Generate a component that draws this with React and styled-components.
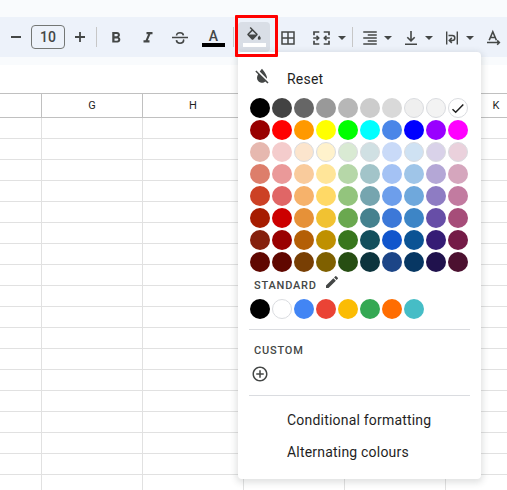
// Packages
import React from "react"
import styled, { createGlobalStyle } from "styled-components"
import {
    MdFormatBold,
    MdFormatItalic,
    MdBorderAll,
    MdFormatAlignRight,
    MdFormatColorReset,
    MdEdit,
    MdAddCircleOutline,
} from "react-icons/md"

// Data
const palette = [
    "#000000 #434343 #666666 #999999 #b7b7b7 #cccccc #d9d9d9 #efefef #f3f3f3 #ffffff",
    "#980000 #ff0000 #ff9900 #ffff00 #00ff00 #00ffff #4a86e8 #0000ff #9900ff #ff00ff",
    "#e6b8af #f4cccc #fce5cd #fff2cc #d9ead3 #d0e0e3 #c9daf8 #cfe2f3 #d9d2e9 #ead1dc",
    "#dd7e6b #ea9999 #f9cb9c #ffe599 #b6d7a8 #a2c4c9 #a4c2f4 #9fc5e8 #b4a7d6 #d5a6bd",
    "#cc4125 #e06666 #f6b26b #ffd966 #93c47d #76a5af #6d9eeb #6fa8dc #8e7cc3 #c27ba0",
    "#a61c00 #cc0000 #e69138 #f1c232 #6aa84f #45818e #3c78d8 #3d85c6 #674ea7 #a64d79",
    "#85200c #990000 #b45f06 #bf9000 #38761d #134f5c #1155cc #0b5394 #351c75 #741b47",
    "#600700 #600700 #783f04 #7f6000 #274e13 #0c343d #1c4587 #073763 #20124d #4c1130",
].flatMap(row => row.split(" "))

const standard =
    "#000000 #ffffff #4285f4 #ea4335 #fbbc04 #34a853 #ff6d01 #46bdc6".split(" ")

const outlined =
    "#efefef #f3f3f3 #ffffff #fce5cd #fff2cc #d9ead3 #d0e0e3 #cfe2f3 #d9d2e9 #ead1dc".split(
        " "
    )

const columns = ["", "G", "H", "I", "J", "K"]
const rows = Array.from({ length: 18 }, (_, i) => i + 1)

// Styles
const GlobalStyle = createGlobalStyle`
    * {
        box-sizing: border-box;
    }

    body {
        margin: 0;
        overflow: hidden;
        background: #ffffff;
        font-family: Roboto, "Liberation Sans", sans-serif;
    }
`

const Page = styled.div`
    position: relative;
    width: 507px;
    height: 490px;
    overflow: hidden;
`

const Header = styled.header`
    height: 65px;
    padding: 17px 0 8px;
    background: #f9fbfd;
`

const Toolbar = styled.div`
    display: flex;
    align-items: center;
    height: 40px;
    padding: 2px 0 0 6px;
    background: #edf2fa;
    color: #444746;

    & > * {
        flex-shrink: 0;
    }
`

const Tool = styled.span`
    display: flex;
    margin-left: ${({ $gap }) => $gap || 0}px;

    svg {
        display: block;
    }
`

const FontSize = styled.span`
    display: flex;
    align-items: center;
    justify-content: center;
    width: 34px;
    height: 24px;
    margin: -2px 0 0 5px;
    border: 1px solid #747775;
    border-radius: 4px;
    font-size: 14px;
    font-weight: 500;
`

const Separator = styled.span`
    width: 1px;
    height: 20px;
    margin: -2px 0 0 ${({ $gap }) => $gap}px;
    background: #c7c7c7;
`

const ColorTool = styled.span`
    display: flex;
    flex-direction: column;
    align-items: center;
    justify-content: space-between;
    width: ${({ $active }) => ($active ? 32 : 23)}px;
    height: ${({ $active }) => ($active ? 30 : 20)}px;
    margin: ${({ $active }) => ($active ? "-2px 0 0 4px" : "-2px 0 0 12px")};
    padding: ${({ $active }) => ($active ? "5px 0" : "0")};
    border-radius: 4px;
    background: ${({ $active }) => ($active ? "#d9dee6" : "none")};
    font-size: 14px;
    font-weight: 500;
    line-height: 18px;
`

const ColorBar = styled.span`
    flex-shrink: 0;
    width: 23px;
    height: 4px;
    margin-top: -2px;
    background: ${({ $color }) => $color};
`

const Formula = styled.div`
    height: 28px;
`

const Row = styled.div`
    display: flex;
    height: ${({ $head }) => ($head ? 25 : 21)}px;
    border-top: ${({ $head }) => ($head ? "1px solid #c0c0c0" : "none")};
    border-bottom: 1px solid ${({ $head }) => ($head ? "#c0c0c0" : "#e1e1e1")};
`

const Cell = styled.div`
    display: flex;
    flex-shrink: 0;
    align-items: center;
    justify-content: center;
    width: 101px;
    border-right: 1px solid ${({ $head }) => ($head ? "#c0c0c0" : "#e1e1e1")};
    color: #1f1f1f;
    font-size: 11px;

    &:first-child {
        width: 42px;
    }
`

const Menu = styled.div`
    position: absolute;
    top: 52px;
    left: 238px;
    width: 243px;
    height: 427px;
    padding: 11px 11px 0;
    border-radius: 4px;
    background: #ffffff;
    box-shadow: 0 2px 6px 2px rgba(60, 64, 67, 0.15);
    color: #444746;
`

const MenuItem = styled.div`
    display: flex;
    align-items: center;
    height: 32px;
    padding-left: ${({ $icon }) => ($icon ? 3 : 38)}px;
    gap: 15px;
    color: #1f1f1f;
    font-size: 14px;
    letter-spacing: 0.2px;

    svg {
        margin-top: -6px;
        color: #444746;
    }
`

const MenuGroup = styled.div`
    padding-top: 8px;
`

const Swatches = styled.div`
    display: grid;
    grid-template-columns: repeat(10, 20px);
    gap: 2px;
    padding: 3px 0 0 1px;
`

const Swatch = styled.span`
    display: flex;
    align-items: center;
    justify-content: center;
    height: 20px;
    border: ${({ $outline }) => ($outline ? "1px solid #dadce0" : "none")};
    border-radius: 50%;
    background: ${({ $color }) => $color};
`

const Title = styled.div`
    display: flex;
    align-items: center;
    height: 24px;
    margin-top: ${({ $top }) => $top || 0}px;
    padding: 2px 0 0 5px;
    gap: 7px;
    font-size: 11px;
    font-weight: 500;
    letter-spacing: 0.8px;

    svg {
        margin-top: -6px;
    }
`

const Divider = styled.div`
    width: 221px;
    height: 1px;
    margin-top: ${({ $top }) => $top}px;
    background: #dadce0;
`

const AddButton = styled.div`
    display: flex;
    height: 18px;
    padding-left: 2px;
    margin-top: 4px;
`

const Highlight = styled.div`
    position: absolute;
    top: 15px;
    left: 235px;
    width: 43px;
    height: 42px;
    border: 3px solid #ff0000;
    border-radius: 1px;
`

// Icons
function Stroke({ width = 20, children }) {
    return (
        <svg
            width={width}
            height={20}
            viewBox={`0 0 ${width} 20`}
            fill="none"
            stroke="currentColor"
            strokeWidth={1.6}
        >
            {children}
        </svg>
    )
}

function Caret({ gap }) {
    return (
        <Tool $gap={gap}>
            <svg width={8} height={4} viewBox="0 0 8 4" fill="currentColor">
                <path d="M0 0h8L4 4z" />
            </svg>
        </Tool>
    )
}

function ColorSwatches({ colors, selected }) {
    return (
        <Swatches>
            {colors.map((color, i) => (
                <Swatch
                    key={i}
                    $color={color}
                    $outline={outlined.includes(color)}
                >
                    {i === selected && (
                        <svg width={14} height={12} viewBox="0 0 14 12">
                            <path
                                d="M1.5 7.2l3.2 3L12.3 2.4"
                                fill="none"
                                stroke="#1f1f1f"
                                strokeWidth={1.5}
                            />
                        </svg>
                    )}
                </Swatch>
            ))}
        </Swatches>
    )
}

function FormatToolbar() {
    return (
        <Toolbar>
            <Tool>
                <Stroke>
                    <path d="M5 9h10" strokeWidth={2} />
                </Stroke>
            </Tool>
            <FontSize>10</FontSize>
            <Tool $gap={5}>
                <Stroke>
                    <path d="M5 9h10M10 4v10" strokeWidth={1.8} />
                </Stroke>
            </Tool>
            <Separator $gap={6} />
            <Tool $gap={10}>
                <MdFormatBold size={18} />
            </Tool>
            <Tool $gap={14}>
                <MdFormatItalic size={18} />
            </Tool>
            <Tool $gap={13}>
                <Stroke>
                    <path d="M2 9.5h16" strokeWidth={1.5} />
                    <path d="M13.4 7.3C13.2 5.5 12 4.7 10 4.7S6.6 5.6 6.6 7.4M6.4 12.2c.2 2 1.6 3 3.6 3s3.6-1 3.6-2.6c0-.4-.1-.8-.3-1.1" />
                </Stroke>
            </Tool>
            <ColorTool>
                A
                <ColorBar $color="#000000" />
            </ColorTool>
            <Separator $gap={8} />
            <ColorTool $active>
                <svg
                    width={18}
                    height={14}
                    viewBox="0 0 24 18.67"
                    fill="currentColor"
                >
                    <path d="M16.56 8.94 7.62 0 6.21 1.41l2.38 2.38-5.15 5.15a1.49 1.49 0 0 0 0 2.12l5.5 5.5c.29.29.68.44 1.06.44s.77-.15 1.06-.44l5.5-5.5c.59-.58.59-1.53 0-2.12zM5.21 10 10 5.21 14.79 10zM19 11.5s-2 2.17-2 3.5a2 2 0 1 0 4 0c0-1.33-2-3.5-2-3.5z" />
                </svg>
                <ColorBar $color="#ffffff" />
            </ColorTool>
            <Tool $gap={9}>
                <MdBorderAll size={18} />
            </Tool>
            <Tool $gap={14}>
                <Stroke>
                    <path
                        d="M8.3 4H3v3.3M3 12.7V16h5.3M12.7 4H18v3.3M18 12.7V16h-5.3"
                        strokeWidth={1.7}
                    />
                    <path d="M2.2 10h5.3M5.5 7.8 7.7 10l-2.2 2.2M18.8 10h-5.3M15.5 7.8 13.3 10l2.2 2.2" />
                </Stroke>
            </Tool>
            <Caret gap={7} />
            <Separator $gap={6} />
            <Tool $gap={8}>
                <MdFormatAlignRight size={18} />
            </Tool>
            <Caret gap={5} />
            <Tool $gap={9}>
                <Stroke>
                    <path d="M10 3v9.5M6.3 9.2l3.7 3.7 3.7-3.7M4 16.2h12" />
                </Stroke>
            </Tool>
            <Caret gap={4} />
            <Tool $gap={9}>
                <Stroke>
                    <path d="M4.7 3.5v13M15.3 3.5v13" strokeWidth={1.4} />
                    <path
                        d="M6.5 7.4h3.8a2.5 2.5 0 0 1 0 5H7.5M9.8 9.9l-2.5 2.5 2.5 2.5"
                        strokeWidth={1.5}
                    />
                </Stroke>
            </Tool>
            <Caret gap={4} />
            <Tool $gap={10}>
                <Stroke>
                    <path d="M5.2 12.2 8.8 3.8l3.6 8.4M6.6 9.5h4.4" />
                    <path
                        d="M3 14.6h12.2M13.2 12.4l2.2 2.2-2.2 2.2"
                        strokeWidth={1.5}
                    />
                </Stroke>
            </Tool>
        </Toolbar>
    )
}

function FillMenu() {
    return (
        <Menu>
            <MenuItem $icon>
                <MdFormatColorReset size={20} />
                Reset
            </MenuItem>

            <ColorSwatches colors={palette} selected={9} />

            <Title>
                STANDARD
                <MdEdit size={16} />
            </Title>

            <ColorSwatches colors={standard} />

            <Divider $top={10} />

            <Title $top={7}>CUSTOM</Title>

            <AddButton>
                <MdAddCircleOutline size={18} />
            </AddButton>

            <Divider $top={12} />

            <MenuGroup>
                <MenuItem>Conditional formatting</MenuItem>
                <MenuItem>Alternating colours</MenuItem>
            </MenuGroup>
        </Menu>
    )
}

function App() {
    return (
        <Page>
            <GlobalStyle />

            <Header>
                <FormatToolbar />
            </Header>

            <Formula />

            <Row $head>
                {columns.map((column, i) => (
                    <Cell $head key={i}>
                        {column}
                    </Cell>
                ))}
            </Row>

            {rows.map(row => (
                <Row key={row}>
                    {columns.map((column, i) => (
                        <Cell key={i} />
                    ))}
                </Row>
            ))}

            <FillMenu />
            <Highlight />
        </Page>
    )
}

export default App
